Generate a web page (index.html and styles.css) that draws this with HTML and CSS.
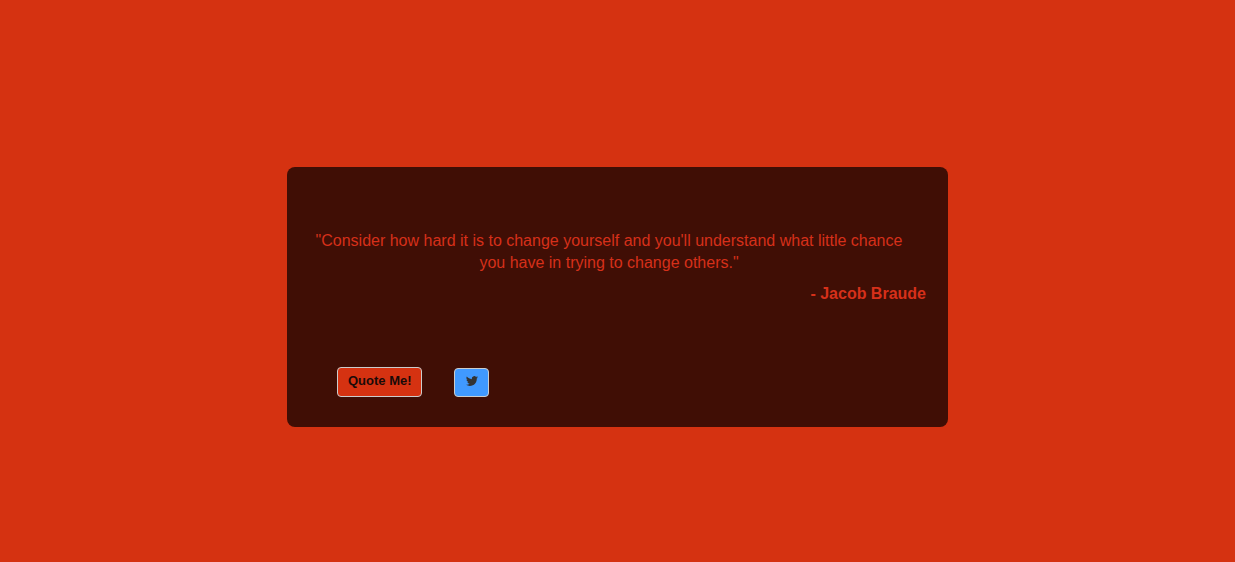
FILE: index.html
```
<!DOCTYPE html>
<html lang="en">
<head>
<meta charset="utf-8">
<meta name="viewport" content="width=device-width, initial-scale=1">
<title>Random Quote Machine</title>
<link rel="stylesheet" href="styles.css">
</head>
<body>
<main class="quote-box">
  <blockquote class="quote">
    <p class="quote-text">"Consider how hard it is to change yourself and you'll understand what little chance you have in trying to change others."</p>
    <footer class="quote-author">- Jacob Braude</footer>
  </blockquote>
  <div class="actions">
    <button class="btn btn-quote" type="button">Quote Me!</button>
    <a class="btn btn-tweet" href="#" aria-label="Tweet this quote">
      <svg class="icon" viewBox="0 0 24 24" aria-hidden="true"><path fill="currentColor" d="M23.95 4.57a10 10 0 0 1-2.82.77 4.96 4.96 0 0 0 2.16-2.72c-.95.55-2 .95-3.13 1.18a4.92 4.92 0 0 0-8.38 4.48C7.69 8.1 4.07 6.13 1.64 3.16a4.92 4.92 0 0 0 1.52 6.57 4.9 4.9 0 0 1-2.23-.61v.06c0 2.39 1.7 4.38 3.95 4.83a5 5 0 0 1-2.21.08 4.94 4.94 0 0 0 4.6 3.42A9.87 9.87 0 0 1 0 19.54a14 14 0 0 0 7.55 2.21c9.05 0 14-7.5 14-13.98 0-.21 0-.42-.02-.63a9.94 9.94 0 0 0 2.46-2.55z"/></svg>
    </a>
  </div>
</main>
</body>
</html>
```
FILE: styles.css
```
* {
  box-sizing: border-box;
}

body {
  margin: 0;
  min-height: 100vh;
  padding: 167px 24px 24px;
  background: #d53211;
  font-family: "Liberation Sans", Arial, sans-serif;
  font-size: 16px;
  line-height: 22px;
}

.quote-box {
  max-width: 661px;
  margin: 0 auto;
  padding: 63px 22px 30px 20px;
  border-radius: 8px;
  background: #400e05;
  color: #d6301a;
}

.quote {
  margin: 0;
}

.quote-text {
  margin: 0 15px 9px 0;
  text-align: center;
}

.quote-author {
  font-weight: bold;
  text-align: right;
}

.actions {
  display: flex;
  align-items: flex-end;
  gap: 32px;
  margin-top: 62px;
  padding-left: 30px;
}

.btn {
  display: flex;
  align-items: center;
  justify-content: center;
  border: 1px solid #ccc;
  border-radius: 4px;
  cursor: pointer;
}

.btn-quote {
  height: 30px;
  padding: 0 9px 3px 10px;
  background: #d53211;
  color: #1a0a08;
  font-family: inherit;
  font-size: 13px;
  font-weight: bold;
}

.btn-tweet {
  height: 29px;
  padding: 0 10px 3px 11px;
  background: #4099ff;
  color: #333;
}

.icon {
  display: block;
  width: 12px;
  height: 12px;
}
```
